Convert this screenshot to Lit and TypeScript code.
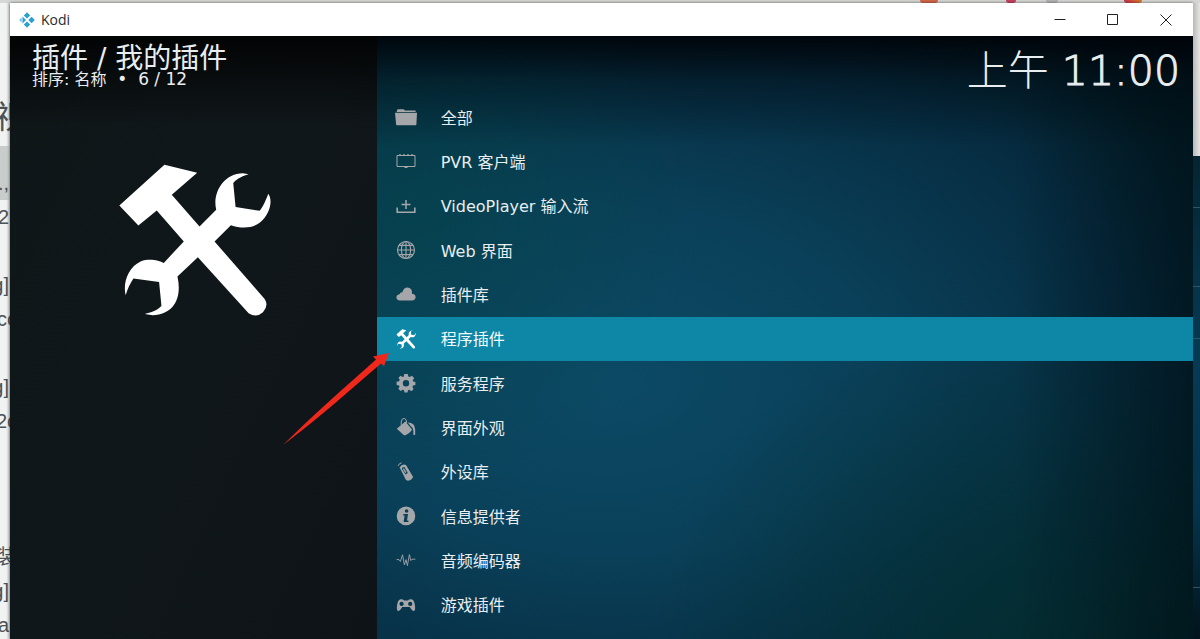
import { LitElement, html, css, svg, TemplateResult } from "lit";
import { customElement, property, state } from "lit/decorators.js";

const TOOLS = "M60 165L195 43L293 67L217 133L300 228L350 178C338 130 370 70 430 69L447 72C420 80 408 90 401 98L408 170L480 181C490 170 498 150 506 130C520 150 512 190 480 217C455 236 420 233 394 224L345 273L495 445Q508 465 490 485Q470 503 447 488L295 320L234 378C248 440 225 490 160 494L136 490C165 482 178 475 186 465L179 394L102 384C92 400 84 415 79 434C70 400 85 350 125 332C150 322 180 330 193 337L253 273L172 180L117 225Z";

const ICONS: Record<string, TemplateResult> = {
  folder: svg`<path fill="currentColor" d="M1 3.6Q1 2.2 2.4 2.2H7.6L9 3.5H19.6V5H0.6Z M-1 5.8H21L20.4 17.6Q20.3 18.2 19.6 18.2H0.8Q0.2 18.2 0.1 17.6Z"/>`,
  tv: svg`<path fill="none" stroke="currentColor" stroke-width="1" d="M1 4.5H19V15.5H1Z"/><path stroke="currentColor" d="M3 3.8H5M7 3.8H9M11 3.8H13M15 3.8H17M8.5 16.5H11.5"/>`,
  input: svg`<path fill="none" stroke="currentColor" stroke-width="1.6" d="M1.2 11.5V16.2H18.8V11.5"/><path stroke="currentColor" stroke-width="1.5" d="M10 4V13M5.5 8.4H14.5"/>`,
  globe: svg`<g fill="none" stroke="currentColor" stroke-width="1.1"><circle cx="10" cy="10" r="8.5"/><ellipse cx="10" cy="10" rx="4.6" ry="8.5"/><path d="M10 1.5V18.5M1.5 10H18.5M3 5.4H17M3 14.6H17"/></g>`,
  cloud: svg`<path fill="currentColor" d="M4 16.5Q0.4 16.3 0.4 13.3Q0.6 10.7 3.6 10.3Q4 8 6.4 8.2Q7.4 3.4 11.6 3.4Q16 3.8 16 8.4Q16 9.2 15.8 9.8Q19.6 10.2 19.6 13.3Q19.4 16.4 16 16.5Z"/>`,
  gear: svg`<path fill="currentColor" fill-rule="evenodd" d="M8.2 1H11.8L12.3 3.5L13.8 4.1L16 2.8L18.2 5.2L16.7 7.3L17.1 8.4L19.4 8.9V12L17 12.5L16.4 13.9L17.6 16L15.4 18.2L13.3 16.8L12 17.3L11.5 19.4H8.5L8 17.2L6.6 16.7L4.6 18L2.3 15.8L3.6 13.8L3 12.4L0.6 12V8.8L3.1 8.2L3.7 6.8L2.4 4.8L4.6 2.7L6.7 4.1L7.8 3.6ZM10 7A3.2 3.2 0 1 0 10 13.4A3.2 3.2 0 1 0 10 7Z"/>`,
  paint: svg`<path fill="currentColor" d="M0.8 11.8L9.3 4.4L16 12.4Q15.6 14.4 9.8 18Q8.6 18.8 7.4 17.8Z"/><path fill="currentColor" d="M11.8 5.5Q19 5.6 19.2 12.5V17.5Q18.2 18.6 17.3 17.5V13.5Q17 10.5 15.2 9.8Z"/><path fill="none" stroke="currentColor" d="M5.2 8V5Q5.5 1.2 8.4 1.4Q10.5 1.8 10.8 6"/>`,
  remote: svg`<path fill="currentColor" fill-rule="evenodd" d="M3.6 5.4Q6 1.6 10 3L17 14.8Q16.4 18 12 18.8L10 18ZM6.6 5.6L5.8 6.8L9.6 12.4L11.8 11L8.4 5Z"/><path fill="none" stroke="currentColor" d="M2.2 3.8Q3 1.2 5.6 0.9"/><path fill="none" stroke="currentColor" stroke-width="1.4" d="M7.4 6.6L9.8 10.6"/>`,
  info: svg`<path fill="currentColor" fill-rule="evenodd" d="M10 0.6A9.3 9.3 0 1 0 10 19.2A9.3 9.3 0 1 0 10 0.6ZM10.6 3.2A1.8 1.8 0 1 1 10.6 6.8A1.8 1.8 0 1 1 10.6 3.2ZM7.4 8H12L11 14.6H12.4V16H7.6L8.6 9.4H7.2Z"/>`,
  wave: svg`<path fill="none" stroke="currentColor" stroke-width="0.9" d="M0.6 9.6H3L4.4 11.4L6.5 4.8L8.4 14.8L10 9.6L11.4 15.6L13.4 4.6L14.8 10.6L16 9.2H19.4"/>`,
  pad: svg`<path fill="currentColor" fill-rule="evenodd" d="M4.6 4.2Q7.2 4 8 5.6H12Q12.8 4 15.4 4.2Q18 4.4 18.8 9.6Q19.8 15.2 18 16Q16.2 16.3 13.8 12H6.2Q3.8 16.3 2 16Q0.2 15.2 1.2 9.6Q2 4.4 4.6 4.2ZM5.6 6.8A2.1 2.1 0 1 0 5.6 11A2.1 2.1 0 1 0 5.6 6.8ZM14.2 6.8A2.1 2.1 0 1 0 14.2 11A2.1 2.1 0 1 0 14.2 6.8Z"/>`,
};

@customElement("kodi-icon")
export class KodiIcon extends LitElement {
  @property() name = "folder";

  static styles = css`
    :host { display: block; }
    svg { display: block; width: 100%; height: 100%; overflow: visible; }
  `;

  render() {
    return this.name === "tools"
      ? html`<svg viewBox="50 35 470 470" aria-hidden="true"><path fill="currentColor" d=${TOOLS} /></svg>`
      : html`<svg viewBox="0 0 20 20" aria-hidden="true">${ICONS[this.name]}</svg>`;
  }
}

const ITEMS = [
  ["folder", "全部"],
  ["tv", "PVR 客户端"],
  ["input", "VideoPlayer 输入流"],
  ["globe", "Web 界面"],
  ["cloud", "插件库"],
  ["tools", "程序插件"],
  ["gear", "服务程序"],
  ["paint", "界面外观"],
  ["remote", "外设库"],
  ["info", "信息提供者"],
  ["wave", "音频编码器"],
  ["pad", "游戏插件"],
];

const DOC_LINES = ["2", "", "g]", "cc", "", "g]", "2c", "", "", "", "装", "g]", "a"];

@customElement("app-root")
export class AppRoot extends LitElement {
  @state() private selected = 5;

  static styles = css`
    :host {
      display: grid;
      grid-template: 3px 1fr / 10px 1fr 7px;
      height: 100vh;
      overflow: hidden;
      position: relative;
      background: #eceeed;
      color: #e8eef0;
      font-family: "DejaVu Sans", "Noto Sans CJK SC", sans-serif;
      font-size: 16px;
    }
    * { box-sizing: border-box; }
    button { font: inherit; color: inherit; background: none; border: 0; padding: 0; margin: 0; }
    ul { list-style: none; margin: 0; padding: 0; }

    .edge { grid-column: 1 / -1; background: #d6d6d5; display: flex; justify-content: flex-end; padding-right: 58px; overflow: hidden; }
    .dot { width: 18px; height: 3px; background: #d4674a; border-radius: 0 0 8px 8px; }
    .dot.pink { width: 10px; background: #c9405f; margin-left: 68px; }
    .dot.grey { width: 12px; background: #b4b4b4; margin-left: 30px; }
    .dot.red { background: linear-gradient(90deg, #c9304f, #dd7b2c); margin-left: 66px; }

    .doc { overflow: hidden; color: #4c5258; font: 20px/34px "Liberation Sans", "Noto Sans CJK SC", sans-serif; background: linear-gradient(90deg, #f1f3f2 60%, #cdd1d0); }
    .doc .heading { height: 143px; padding-top: 97px; font-size: 32px; white-space: nowrap; text-indent: -5px; }
    .doc .line { height: 34px; display: flex; justify-content: flex-end; padding-right: 1px; white-space: nowrap; }
    .doc .wide { margin-right: -8px; }
    .doc .band { height: 54px; padding-top: 20px; background: #c8cccb; }

    .behind { display: flex; flex-direction: column; background: linear-gradient(#02090b, #04222c 20%, #063a54 55%, #05334b 80%, #02131b); }
    .behind .sheet { height: 153px; background: linear-gradient(90deg, #b9b9b7, #e6e5e3); }
    .behind .tick { border-bottom: 1px solid #2c5666; height: 52px; }
    .behind .tick.mid { height: 79px; }
    .behind .tick.far { height: 249px; }

    .window { display: flex; flex-direction: column; min-width: 0; min-height: 0; background: #0b1014; box-shadow: 0 0 3px rgba(0, 0, 0, 0.6); }
    .titlebar { flex: none; height: 33px; display: flex; align-items: center; background: #fff; color: #2b2b2b; padding: 0 1px 0 9px; font: 14px/20px "Open Sans", sans-serif; }
    .logo { width: 16px; height: 16px; margin-right: 6px; }
    .caption { flex: 1; }
    .control { width: 53px; height: 33px; display: grid; place-items: center; }
    .control svg { width: 12px; height: 12px; fill: none; stroke: #222; stroke-width: 1; }

    .screen { flex: 1; min-height: 0; display: grid; grid-template-columns: 31fr 69fr; }
    .side { padding: 11px 0 0 22px; background: linear-gradient(rgba(0, 0, 0, 0.85), rgba(0, 0, 0, 0) 90px), linear-gradient(115deg, #0f1618, #10171a 50%, #0e1318); }
    .title { margin: 0; font-size: 28px; line-height: 24px; font-weight: 400; white-space: nowrap; }
    .sort { margin: 0; font-size: 16px; line-height: 16px; white-space: pre; }
    .count { font-size: 17px; }
    .art { width: 157px; height: 157px; margin: 74px auto 0 84px; color: #fff; }

    .main {
      display: flex; flex-direction: column; min-height: 0; padding-bottom: 12px;
      background:
        linear-gradient(rgba(0, 3, 8, 0.92), rgba(0, 6, 12, 0.4) 45px, rgba(0, 0, 0, 0) 110px),
        linear-gradient(90deg, rgba(0, 14, 20, 0) 78%, rgba(0, 14, 20, 0.6)),
        radial-gradient(ellipse 48% 55% at 82% 100%, rgba(3, 46, 48, 0.85), rgba(3, 46, 48, 0)),
        radial-gradient(ellipse 35% 50% at 4% 28%, rgba(4, 68, 74, 0.6), rgba(4, 68, 74, 0)),
        radial-gradient(ellipse 85% 72% at 28% 57%, #0c4a66, #0a4059 40%, #062c41 78%, #03202b);
    }
    .clock { flex: none; height: 59px; padding: 5px 13px 0 0; text-align: right; font-size: 41px; line-height: 60px; white-space: nowrap; font-weight: 300; }
    .digits { -webkit-text-stroke: 1px currentColor; }
    .list { flex: 1; min-height: 0; display: grid; grid-auto-rows: 1fr; }
    .row { width: 100%; height: 100%; display: flex; align-items: center; gap: 25px; padding-left: 19px; text-align: left; white-space: nowrap; }
    .row span { padding-bottom: 1px; }
    .row kodi-icon { width: 20px; height: 20px; color: #a4a6aa; flex: none; }
    .row.on { background: #0e86a6; color: #f4fafb; }
    .row.on kodi-icon { color: #fff; }

    .pointer { position: absolute; left: 280px; top: 350px; width: 112px; height: 98px; pointer-events: none; }
  `;

  render() {
    return html`
      <div class="edge">
        <span class="dot"></span><span class="dot pink"></span><span class="dot grey"></span><span class="dot red"></span>
      </div>
      <div class="doc" aria-hidden="true">
        <div class="heading">视</div>
        <div class="band line">.,</div>
        ${DOC_LINES.map((t) => html`<div class="line ${t.endsWith("c") || t === "装" ? "wide" : ""}">${t}</div>`)}
      </div>
      <section class="window">
        <header class="titlebar">
          <svg class="logo" viewBox="0 0 16 16" aria-hidden="true">
            <path fill="#2b9fcf" d="M8 0.2L11.2 3.4L8 6.6L4.8 3.4ZM12.6 4.8L15.8 8L12.6 11.2L9.4 8ZM8 9.4L11.2 12.6L8 15.8L4.8 12.6ZM3.5 4.6L7 8L3.5 11.4Z" />
            <path fill="#6cc3e4" d="M2.7 5.3V10.7L0.2 8Z" />
          </svg>
          <span class="caption">Kodi</span>
          <button class="control" aria-label="最小化"><svg viewBox="0 0 12 12"><path d="M0.5 5.5H11.5" /></svg></button>
          <button class="control" aria-label="最大化"><svg viewBox="0 0 12 12"><path d="M0.5 0.5H10.5V10.5H0.5Z" /></svg></button>
          <button class="control" aria-label="关闭"><svg viewBox="0 0 12 12"><path d="M0.5 0.5L11.5 11.5M11.5 0.5L0.5 11.5" /></svg></button>
        </header>
        <div class="screen">
          <aside class="side">
            <h1 class="title">插件 / 我的插件</h1>
            <p class="sort">排序: 名称<span class="count">  •  ${this.selected + 1} / ${ITEMS.length}</span></p>
            <kodi-icon class="art" name="tools"></kodi-icon>
          </aside>
          <main class="main">
            <div class="clock">上午 <span class="digits">11:00</span></div>
            <ul class="list">
              ${ITEMS.map(
                ([icon, label], i) => html`<li>
                  <button class="row ${i === this.selected ? "on" : ""}" @click=${() => (this.selected = i)}>
                    <kodi-icon name=${icon}></kodi-icon><span>${label}</span>
                  </button>
                </li>`
              )}
            </ul>
          </main>
        </div>
      </section>
      <div class="behind">
        <div class="sheet"></div>
        <div class="tick"></div>
        <div class="tick mid"></div>
        <div class="tick"></div>
        <div class="tick far"></div>
      </div>
      <svg class="pointer" viewBox="280 350 112 98" aria-hidden="true">
        <path fill="#f0281c" d="M389 353L384 366L381 363.5C350 390 318 419 283 445C312 416 345 387 376 359.5L373 356.5Z" />
      </svg>
    `;
  }
}
